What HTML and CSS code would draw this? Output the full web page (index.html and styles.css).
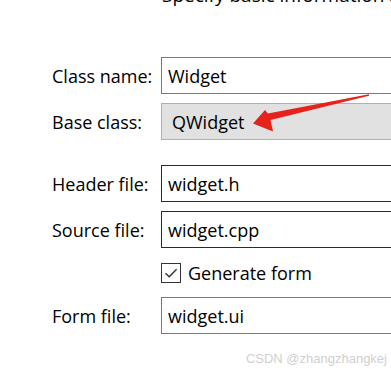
FILE: index.html
```html
<!DOCTYPE html>
<html>
<head>
<meta charset="utf-8">
<link rel="stylesheet" href="styles.css">
</head>
<body>
<div class="page">
  <div class="intro">Specify basic information about the classes</div>
  <div class="form">
    <div class="row r1">
      <div class="label">Class name:</div>
      <div class="field">Widget</div>
    </div>
    <div class="row r2">
      <div class="label">Base class:</div>
      <div class="field combo">QWidget</div>
    </div>
    <div class="row r3">
      <div class="label">Header file:</div>
      <div class="field dark">widget.h</div>
    </div>
    <div class="row r4">
      <div class="label">Source file:</div>
      <div class="field dark">widget.cpp</div>
    </div>
    <div class="row check-row">
      <div class="label"></div>
      <div class="check">
        <span class="box"><svg width="18" height="18" viewBox="0 0 18 18"><path d="M3.5 9.2 L7.2 12.8 L14.6 5.2" fill="none" stroke="#333" stroke-width="1.4"/></svg></span>
        <span class="check-text">Generate form</span>
      </div>
    </div>
    <div class="row r6">
      <div class="label">Form file:</div>
      <div class="field">widget.ui</div>
    </div>
  </div>
  <div class="watermark">CSDN @zhangzhangkej</div>
  <svg class="arrow" width="391" height="369" viewBox="0 0 391 369">
    <path d="M369 94.3 L268 113.5 L265 110 L253 123.5 L273 131.5 L270.5 120 L369 95.8 Z" fill="#e8221b"/>
  </svg>
</div>
</body>
</html>
```
FILE: styles.css
```css
html, body {
  margin: 0;
  padding: 0;
  background: #fff;
}
.page {
  position: relative;
  width: 391px;
  height: 369px;
  overflow: hidden;
  font-family: "Open Sans", "Noto Sans", sans-serif;
  color: #000;
}
.intro {
  font-size: 19px;
  line-height: 20px;
  margin-top: -15px;
  padding-left: 162px;
  white-space: nowrap;
}
.form {
  display: flex;
  flex-direction: column;
  margin-top: 52px;
  padding-left: 52px;
}
.row {
  display: flex;
  align-items: center;
  height: 37px;
}
.r2 { margin-top: 9px; }
.r3 { margin-top: 25px; }
.r4 { margin-top: 9px; }
.check-row { margin-top: 15px; height: 20px; }
.r6 { margin-top: 14px; }
.label {
  width: 109px;
  flex: none;
  font-size: 18px;
  white-space: nowrap;
}
.field {
  box-sizing: border-box;
  width: 260px;
  height: 37px;
  flex: none;
  border: 1px solid #7a7a7a;
  padding-left: 6px;
  font-size: 18px;
  display: flex;
  align-items: center;
  white-space: nowrap;
}
.field.dark { border-color: #2b2b2b; }
.field.combo {
  background: #e1e1e1;
  border-color: #a9b1bb;
  padding-left: 10px;
}
.check {
  display: flex;
  align-items: center;
  gap: 7px;
}
.box {
  box-sizing: border-box;
  width: 20px;
  height: 20px;
  border: 1px solid #333;
  display: flex;
  align-items: center;
  justify-content: center;
}
.box svg { display: block; }
.check-text {
  font-size: 18px;
  white-space: nowrap;
}
.watermark {
  position: absolute;
  right: 4px;
  bottom: 3px;
  font-family: "Liberation Sans", sans-serif;
  font-size: 13px;
  color: #d0d0d0;
}
.arrow {
  position: absolute;
  left: 0;
  top: 0;
}
```
